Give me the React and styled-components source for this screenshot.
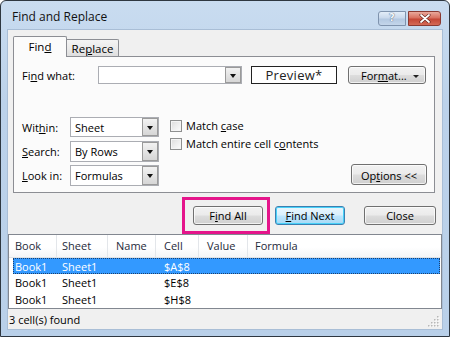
import React from 'react';
import styled, { createGlobalStyle, css } from 'styled-components';

const Global = createGlobalStyle`
  html, body { margin: 0; padding: 0; background: #fff; }
  body { font-family: "Open Sans", "Noto Sans", sans-serif; font-size: 11px; color: #000; }
  * { box-sizing: border-box; }
`;

const Window = styled.div`
  width: 450px;
  height: 337px;
  border: 1px solid #2e3740;
  border-radius: 6px 6px 0 0;
  background: linear-gradient(180deg, #c9dcf0 0%, #bcd2ea 30%, #b9d0e9 100%);
  padding: 0 7px 7px 7px;
  display: flex;
  flex-direction: column;
  overflow: hidden;
`;

const TitleBar = styled.div`
  height: 29px;
  flex: none;
  display: flex;
  align-items: center;
  padding-left: 4px;
  margin-right: 1px;
`;

const Title = styled.div`
  flex: 1;
  font-size: 12px;
  color: #111;
  padding-top: 2px;
`;

const CapButton = styled.div`
  height: 15px;
  margin-top: 5px;
  display: flex;
  align-items: center;
  justify-content: center;
  border: 1px solid ${p => (p.$close ? '#8a3a32' : '#7f93ad')};
  ${p => p.$close ? css`
    width: 33px;
    border-radius: 0 3px 3px 0;
    background: linear-gradient(180deg, #e9a99c 0%, #d8705f 45%, #c44736 55%, #d46a56 100%);
  ` : css`
    width: 28px;
    margin-right: 2px;
    border-radius: 3px 0 0 3px;
    background: linear-gradient(180deg, #e3edf8 0%, #c9d9ec 45%, #b3c8e1 55%, #c4d6ea 100%);
  `}
`;

const HelpGlyph = styled.span`
  font-family: "DejaVu Sans", sans-serif;
  font-size: 10px;
  font-weight: bold;
  color: #f4f7fb;
  text-shadow: 0 0 1px #566a84, 0 0 1px #566a84;
  line-height: 1;
`;

const Client = styled.div`
  flex: 1;
  background: #f0f0f0;
  box-shadow: 0 0 0 1px #a9bed6;
  display: flex;
  flex-direction: column;
  min-height: 0;
`;

const TabStrip = styled.div`
  height: 26px;
  flex: none;
  padding: 6px 0 0 5px;
  display: flex;
  align-items: flex-end;
`;

const Tab = styled.div`
  display: flex;
  align-items: center;
  justify-content: center;
  border: 1px solid #8c8e94;
  border-bottom: none;
  font-size: 11.5px;
  ${p => p.$active ? css`
    width: 54px;
    height: 21px;
    margin-bottom: -1px;
    background: #fbfbfb;
    position: relative;
    z-index: 1;
    border-radius: 2px 2px 0 0;
    padding-bottom: 1px;
  ` : css`
    width: 52px;
    height: 17px;
    border-left: none;
    border-radius: 0 2px 0 0;
    background: linear-gradient(180deg, #f4f4f4 0%, #ebebeb 50%, #dedede 100%);
  `}
`;

const Panel = styled.div`
  height: 137px;
  flex: none;
  margin: 0 7px 0 5px;
  border: 1px solid #8c8e94;
  background: #fbfbfb;
  padding: 9px 8px 0 8px;
  display: flex;
  flex-direction: column;
`;

const TopRow = styled.div`
  height: 18px;
  display: flex;
  align-items: center;
`;

const Label = styled.div`
  width: ${p => p.$w}px;
  flex: none;
  white-space: nowrap;
`;

const Key = styled.span`
  text-decoration: underline;
  text-underline-offset: 1px;
`;

const Combo = styled.div`
  width: ${p => p.$w}px;
  height: ${p => p.$h}px;
  flex: none;
  border: 1px solid #abadb3;
  background: #fff;
  display: flex;
  align-items: stretch;
`;

const ComboText = styled.div`
  flex: 1;
  display: flex;
  align-items: center;
  padding-left: 4px;
`;

const DropBtn = styled.div`
  width: 16px;
  flex: none;
  border: 1px solid #9a9a9a;
  background: linear-gradient(180deg, #f2f2f2 0%, #e4e4e4 50%, #d6d6d6 100%);
  display: flex;
  align-items: center;
  justify-content: center;
`;

const Arrow = styled.span`
  width: 0;
  height: 0;
  border-left: 3.5px solid transparent;
  border-right: 3.5px solid transparent;
  border-top: 4px solid #111;
  margin-top: 1px;
`;

const Preview = styled.div`
  width: 86px;
  height: 18px;
  flex: none;
  margin-left: 9px;
  border: 1px solid #222;
  background: #fff;
  display: flex;
  align-items: center;
  justify-content: center;
  font-size: 13px;
  letter-spacing: 0.3px;
  color: #222;
`;

const Button = styled.div`
  width: ${p => p.$w}px;
  height: ${p => p.$h || 19}px;
  flex: none;
  display: flex;
  align-items: center;
  justify-content: ${p => (p.$split ? 'space-between' : 'center')};
  padding: 1px ${p => (p.$split ? '6px' : '0')} 0 ${p => (p.$split ? '12px' : '0')};
  border: 1px solid ${p => (p.$default ? '#3c7fb1' : '#707070')};
  border-radius: 3px;
  background: linear-gradient(180deg, #f2f2f2 0%, #ebebeb 48%, #dddddd 52%, #cfcfcf 100%);
  box-shadow: inset 0 0 0 1px ${p => (p.$default ? '#48d1f8' : 'rgba(255,255,255,0.7)')};
  ${p => p.$default && css`
    background: linear-gradient(180deg, #eaf6fd 0%, #d9f0fc 48%, #bee6fd 52%, #a7d9f5 100%);
  `}
  white-space: nowrap;
`;

const SmallArrow = styled.span`
  width: 0;
  height: 0;
  border-left: 3px solid transparent;
  border-right: 3px solid transparent;
  border-top: 3px solid #222;
  margin-top: 1px;
`;

const Lower = styled.div`
  margin-top: 33px;
  display: flex;
  align-items: flex-start;
`;

const FieldGrid = styled.div`
  display: grid;
  grid-template-columns: 48px 89px;
  grid-auto-rows: 20px;
  row-gap: 4px;
  align-items: center;
`;

const Checks = styled.div`
  margin-left: 11px;
  padding-top: 2px;
  display: flex;
  flex-direction: column;
  gap: 5px;
`;

const CheckRow = styled.div`
  height: 13px;
  display: flex;
  align-items: center;
  gap: 4px;
  white-space: nowrap;
`;

const Box = styled.span`
  width: 12px;
  height: 12px;
  flex: none;
  border: 1px solid #8e8f8f;
  background: linear-gradient(135deg, #dcdcdc 0%, #f0f0f0 60%, #fbfbfb 100%);
  box-shadow: inset 0 0 0 1px #f4f4f4;
`;

const OptionsWrap = styled.div`
  margin-left: auto;
  margin-right: -1px;
  align-self: flex-end;
`;

const ButtonRow = styled.div`
  height: 41px;
  flex: none;
  display: flex;
  align-items: center;
  padding: 4px 6px 1px 0;
  justify-content: flex-end;
`;

const Highlight = styled.div`
  border: 3px solid #e5158b;
  padding: 6px 4px 6px 8px;
  margin-right: 5px;
  position: relative;
  z-index: 2;
`;

const Gap = styled.div`
  width: ${p => p.$w}px;
  flex: none;
`;

const List = styled.div`
  height: 75px;
  flex: none;
  border: 1px solid #828790;
  background: #fff;
  display: flex;
  flex-direction: column;
`;

const HeaderRow = styled.div`
  height: 23px;
  display: grid;
  grid-template-columns: 48px 51px 48px 43px 49px 1fr;
  background: linear-gradient(180deg, #ffffff 0%, #ffffff 55%, #f4f5f7 100%);
  border-bottom: 1px solid #dfe2e6;
`;

const HeadCell = styled.div`
  display: flex;
  align-items: center;
  padding-left: ${p => p.$p}px;
  border-right: ${p => (p.$last ? 'none' : '1px solid #e3e6ea')};
  color: #1e2a3a;
`;

const DataRow = styled.div`
  height: 17px;
  margin: 0 1px 0 4px;
  display: grid;
  grid-template-columns: 44px 51px 48px 43px 49px 1fr;
  align-items: center;
  ${p => p.$selected && css`
    background: #3399ff;
    color: #fff;
    outline: 1px dotted #1c3f6a;
    outline-offset: -1px;
  `}
`;

const Cell = styled.div`
  padding-left: ${p => p.$p}px;
  white-space: nowrap;
  overflow: hidden;
`;

const Status = styled.div`
  flex: 1;
  display: flex;
  align-items: center;
  justify-content: space-between;
  padding: 0 2px 0 1px;
`;

const cols = [
  { p: 6, h: 'Book' },
  { p: 5, h: 'Sheet' },
  { p: 8, h: 'Name' },
  { p: 8, h: 'Cell' },
  { p: 8, h: 'Value' },
  { p: 7, h: 'Formula' },
];

const rows = [
  ['Book1', 'Sheet1', '', '$A$8', '', ''],
  ['Book1', 'Sheet1', '', '$E$8', '', ''],
  ['Book1', 'Sheet1', '', '$H$8', '', ''],
];

function Grip() {
  const dots = [[9, 1], [6, 4], [9, 4], [3, 7], [6, 7], [9, 7], [0, 10], [3, 10], [6, 10], [9, 10]];
  return (
    <svg width="12" height="12" viewBox="0 0 12 12" style={{ alignSelf: 'flex-end', marginBottom: 2 }}>
      {dots.map(([x, y], i) => (
        <g key={i}>
          <rect x={x + 1} y={y + 1} width="1.5" height="1.5" fill="#fff" />
          <rect x={x} y={y} width="1.5" height="1.5" fill="#b8b8b8" />
        </g>
      ))}
    </svg>
  );
}

function CloseX() {
  return (
    <svg width="12" height="9" viewBox="0 0 12 9">
      <path d="M2 1 L10 8 M10 1 L2 8" stroke="#5a1c16" strokeWidth="3" strokeLinecap="round" />
      <path d="M2 1 L10 8 M10 1 L2 8" stroke="#fff" strokeWidth="1.8" strokeLinecap="round" />
    </svg>
  );
}

export default function App() {
  return (
    <>
      <Global />
      <Window>
        <TitleBar>
          <Title>Find and Replace</Title>
          <CapButton><HelpGlyph>?</HelpGlyph></CapButton>
          <CapButton $close><CloseX /></CapButton>
        </TitleBar>
        <Client>
          <TabStrip>
            <Tab $active><span>Fin<Key>d</Key></span></Tab>
            <Tab><span>Re<Key>p</Key>lace</span></Tab>
          </TabStrip>
          <Panel>
            <TopRow>
              <Label $w={76}>Fi<Key>n</Key>d what:</Label>
              <Combo $w={144} $h={18}>
                <ComboText />
                <DropBtn><Arrow /></DropBtn>
              </Combo>
              <Preview>Preview*</Preview>
              <Gap $w={11} />
              <Button $w={78} $h={18} $split>
                <span>For<Key>m</Key>at...</span>
                <SmallArrow />
              </Button>
            </TopRow>
            <Lower>
              <FieldGrid>
                <Label>Wit<Key>h</Key>in:</Label>
                <Combo $w={89} $h={20}>
                  <ComboText>Sheet</ComboText>
                  <DropBtn><Arrow /></DropBtn>
                </Combo>
                <Label><Key>S</Key>earch:</Label>
                <Combo $w={89} $h={21}>
                  <ComboText>By Rows</ComboText>
                  <DropBtn><Arrow /></DropBtn>
                </Combo>
                <Label><Key>L</Key>ook in:</Label>
                <Combo $w={89} $h={21}>
                  <ComboText>Formulas</ComboText>
                  <DropBtn><Arrow /></DropBtn>
                </Combo>
              </FieldGrid>
              <Checks>
                <CheckRow><Box /><span>Match <Key>c</Key>ase</span></CheckRow>
                <CheckRow><Box /><span>Match entire cell c<Key>o</Key>ntents</span></CheckRow>
              </Checks>
              <OptionsWrap>
                <Button $w={76} $h={21}><span>Op<Key>t</Key>ions &lt;&lt;</span></Button>
              </OptionsWrap>
            </Lower>
          </Panel>
          <ButtonRow>
            <Highlight>
              <Button $w={70}><span>F<Key>i</Key>nd All</span></Button>
            </Highlight>
            <Button $w={70} $default><span><Key>F</Key>ind Next</span></Button>
            <Gap $w={19} />
            <Button $w={72}><span>Close</span></Button>
          </ButtonRow>
          <List>
            <HeaderRow>
              {cols.map((c, i) => (
                <HeadCell key={c.h} $p={c.p} $last={i === cols.length - 1}>{c.h}</HeadCell>
              ))}
            </HeaderRow>
            {rows.map((r, ri) => (
              <DataRow key={ri} $selected={ri === 0}>
                {r.map((v, ci) => (
                  <Cell key={ci} $p={ci === 0 ? 2 : cols[ci].p}>{v}</Cell>
                ))}
              </DataRow>
            ))}
          </List>
          <Status>
            <span>3 cell(s) found</span>
            <Grip />
          </Status>
        </Client>
      </Window>
    </>
  );
}
